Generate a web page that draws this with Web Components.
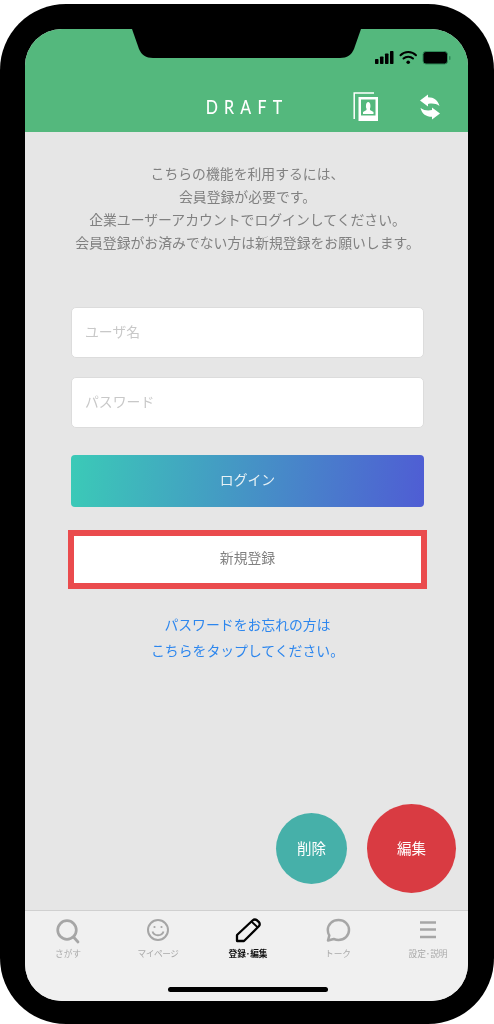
<!DOCTYPE html>
<html lang="ja"><head><meta charset="utf-8"><title>DRAFT</title>
<style>html,body{margin:0;background:#fff}body{font-family:"Noto Sans CJK JP","Noto Sans",sans-serif}</style>
</head><body>
<phone-frame>
  <status-icons slot="status"></status-icons>
  <app-header slot="header"></app-header>
  <login-form></login-form>
  <fab-group slot="fabs"></fab-group>
  <tab-bar slot="tabs"></tab-bar>
</phone-frame>
<script>
function def(name, html){
  customElements.define(name, class extends HTMLElement{
    constructor(){super();this.attachShadow({mode:'open'}).innerHTML=html;}
  });
}
def('phone-frame',`<style>
:host{display:block;box-sizing:border-box;width:494px;height:1020px;margin-top:4px;padding:25px 26px 23px 25px;background:#000;border-radius:66px;position:relative;overflow:hidden;filter:blur(.35px)}
.screen{height:100%;border-radius:37px;overflow:hidden;display:flex;flex-direction:column;position:relative;background:#e6e6e6}
.main{flex:1;position:relative;min-height:0}
.notch{position:absolute;left:107px;top:0;width:229px;height:29px;display:block}
.home{position:absolute;left:143px;top:958px;width:160px;height:5px;border-radius:3px;background:#000}
</style>
<div class="screen">
  <slot name="header"></slot>
  <div class="main"><slot></slot><slot name="fabs"></slot></div>
  <slot name="tabs"></slot>
  <svg class="notch" viewBox="0 0 229 29"><path d="M0 0H229L222 20C219.500 26 215 29 208 29H21C14 29 9.500 26 7 20Z" fill="#000"/></svg>
  <slot name="status"></slot>
  <div class="home"></div>
</div>`);
def('status-icons',`<style>
:host{position:absolute;left:350px;top:21px;display:block;width:80px;height:16px}
svg{display:block}
</style>
<svg width="80" height="16" viewBox="0 0 80 16">
<g fill="#000"><rect x="0" y="9" width="3.500" height="5" rx=".7"/><rect x="5" y="6.500" width="3.500" height="7.500" rx=".7"/><rect x="10" y="3.500" width="3.500" height="10.500" rx=".7"/><rect x="15" y="1" width="3.500" height="13" rx=".7"/></g>
<g fill="none" stroke="#000" stroke-width="2" stroke-linecap="round"><path d="M25.500 5.300C29.500 1 37 1 41 5.300"/><path d="M28.500 8.500C31 6 35.500 6 38 8.500"/></g><circle cx="33.200" cy="12.300" r="1.800"/>
<rect x="48" y="1.500" width="24.500" height="12.500" rx="3" fill="#000" stroke="#2f8a58" stroke-width="1"/>
<rect x="74" y="6" width="1.500" height="4" rx=".7" fill="#2f8a58"/>
</svg>`);
def('app-header',`<style>
:host{display:block;height:103px;background:#54b87d;flex:none;box-sizing:border-box;padding-top:62px;position:relative}
.row{display:grid;grid-template-columns:1fr 96px 1fr;align-items:center;height:30px}
.logo{grid-column:2;align-self:start;font:500 16px/30px "Lato",sans-serif;color:#fff;letter-spacing:6.200px;white-space:nowrap;text-align:center;padding:1px 0 0 1px;transform:scaleY(1.2)}
.acts{grid-column:3;display:flex;gap:40px;padding-left:58px;align-items:center}
svg{display:block;flex:none}
</style>
<div class="row"><div class="logo">DRAFT</div>
<div class="acts">
<svg width="26" height="30" viewBox="0 0 26 30"><path d="M21 1H1.200V27" fill="none" stroke="#fff" stroke-width="1.500"/><path fill-rule="evenodd" fill="#fff" d="M5.500 5H25V29H5.500ZM8 7.500V23.500H22.500V7.500Z"/><path d="M10 22V20L13.500 18V16.500C12.700 15.500 12.500 10 15.200 10S17.700 15.500 17 16.500V18L20.500 20V22Z" fill="#fff"/></svg>
<svg width="22" height="26" viewBox="0 0 22 26"><g fill="#fff"><path d="M1 6.500 9 .5V3.200C15 3.200 19 6 20.500 12 17 9.500 13 9 9 10V12.500Z"/><path d="M21 19.500 13 25.500V22.800C7 22.800 3 20 1.500 14 5 16.500 9 17 13 16V13.500Z"/></g></svg>
</div></div>`);
def('login-form',`<style>
:host{display:block;box-sizing:border-box;padding:30px 44px 0 46px;font-size:13.850px;color:#808080}
.msg{margin:0 -20px;text-align:center;line-height:23px}
.fields{display:flex;flex-direction:column;margin-top:53px}
.inp{box-sizing:border-box;height:51px;background:#fff;border:1px solid #dcdcdc;border-radius:5px;padding-left:13px;line-height:47px;color:#c8c8c8;margin-bottom:19px}
.login{height:52px;margin-top:8px;border-radius:4px;background:linear-gradient(95deg,#3bcab7,#4f5dd4);color:#e8f2f5;text-align:center;line-height:48px}
.reg{box-sizing:border-box;height:59px;margin:23px -3px 0;border:6.500px solid #ea4b4d;background:#fff;text-align:center;line-height:43px;color:#808080}
.links{margin:22px 0 0;text-align:center;line-height:26px;color:#2c86ee}
</style>
<p class="msg">こちらの機能を利用するには、<br>会員登録が必要です。<br>企業ユーザーアカウントでログインしてください。<br>会員登録がお済みでない方は新規登録をお願いします。</p>
<div class="fields">
<div class="inp">ユーザ名</div>
<div class="inp">パスワード</div>
<div class="login">ログイン</div>
<div class="reg">新規登録</div>
</div>
<p class="links">パスワードをお忘れの方は<br>こちらをタップしてください。</p>`);
def('fab-group',`<style>
:host{position:absolute;right:12px;bottom:17px;display:flex;align-items:center;gap:20px}
div{box-sizing:border-box;padding-bottom:2px;border-radius:50%;color:#fff;display:flex;align-items:center;justify-content:center;font-size:14.500px}
.a{width:71px;height:71px;background:#46b0a9}
.b{width:89px;height:89px;background:#d93b42}
</style><div class="a">削除</div><div class="b">編集</div>`);
const ic='fill="none" stroke="#a6a6a6"';
def('tab-item',`<style>
:host{display:flex;flex-direction:column;align-items:center;color:#aaa;font-size:8.700px;line-height:12px;white-space:nowrap}
:host([active]){color:#111;font-weight:700}
.i{height:27px;margin-bottom:3px}
</style><div class="i"><slot name="icon"></slot></div><slot></slot>`);
def('tab-bar',`<style>
:host{display:block;flex:none;height:91px;box-sizing:border-box;background:#f0f0f0;border-top:1px solid #d0d0d0;padding:7px 0 0 3px}
.g{display:grid;grid-template-columns:repeat(5,90px);justify-content:center}
svg{display:block}
</style><div class="g">
<tab-item><svg slot="icon" width="26" height="27" viewBox="0 0 26 27" ${ic} stroke-width="2.700"><circle cx="12" cy="12" r="9.300"/><path d="M18.500 19 23 24" stroke-linecap="round"/></svg>さがす</tab-item>
<tab-item><svg slot="icon" width="24" height="27" viewBox="0 0 24 27" ${ic} stroke-width="2"><circle cx="12" cy="12" r="10"/><path d="M6.500 13.500C8 18.500 16 18.500 17.500 13.500" stroke-width="1.800"/><circle cx="8.500" cy="9" r="1.100" fill="#a6a6a6" stroke="none"/><circle cx="15.500" cy="9" r="1.100" fill="#a6a6a6" stroke="none"/></svg><span style="letter-spacing:-.5px">マイページ</span></tab-item>
<tab-item active><svg slot="icon" width="26" height="27" viewBox="0 0 26 27" fill="none" stroke="#000" stroke-width="2.300" stroke-linejoin="round"><path d="M2 23V17L17.500 2.500C19 1.200 20.500 1.200 22 2.300L24 4.200C25 5.700 25 7 23.800 8.300L9 23Z"/><path d="M16.500 3.500 22.800 9.500" stroke-width="1.800"/></svg>登録･編集</tab-item>
<tab-item><svg slot="icon" width="26" height="27" viewBox="0 0 26 27" ${ic} stroke-width="2.500" stroke-linejoin="round"><path d="M13.500 2C19.500 2 24 6.200 24 12S19.500 22 13.500 22C11.500 22 10 21.500 8.800 21L3 22.500 4.300 17.500C3.300 15.800 2.800 14 2.800 12 2.800 6.200 7.500 2 13.500 2Z"/></svg>トーク</tab-item>
<tab-item><svg slot="icon" width="20" height="27" viewBox="0 0 20 27" ${ic} stroke-width="2.300"><path d="M2 4.500H18M2 11.500H18M2 19H18"/></svg>設定･説明</tab-item>
</div>`);
</script>
</body></html>
